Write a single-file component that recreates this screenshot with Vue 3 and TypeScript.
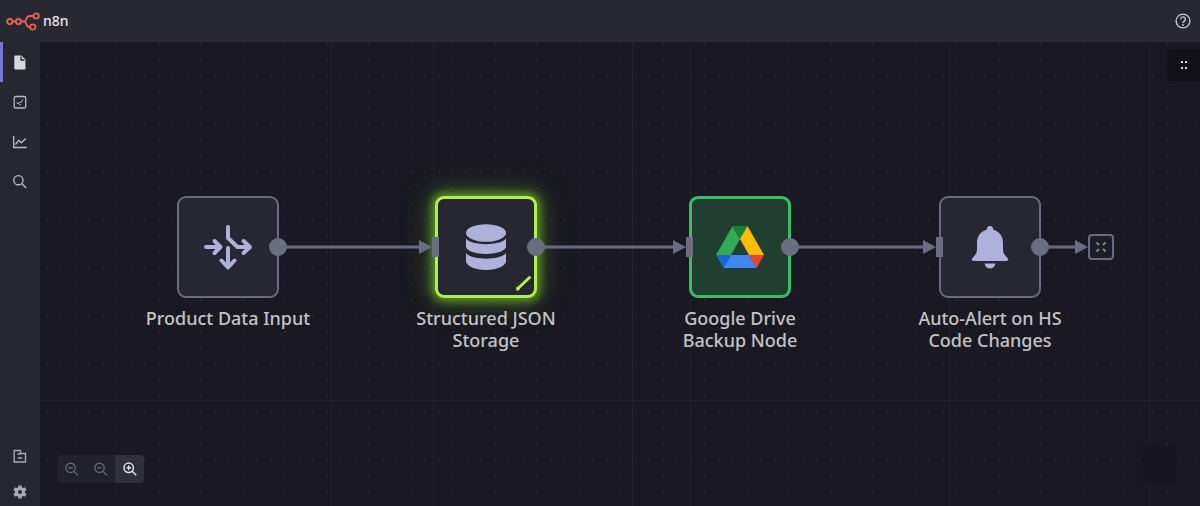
<script setup lang="ts">
import { ref } from 'vue'

type Kind = 'split' | 'database' | 'drive' | 'bell'

interface FlowNode {
  id: string
  kind: Kind
  lines: string[]
  x: number
  y: number
  hasInput: boolean
}

const nodes: FlowNode[] = [
  { id: 'input', kind: 'split', lines: ['Product Data Input'], x: 137, y: 154, hasInput: false },
  { id: 'storage', kind: 'database', lines: ['Structured JSON', 'Storage'], x: 395, y: 154, hasInput: true },
  { id: 'backup', kind: 'drive', lines: ['Google Drive', 'Backup Node'], x: 649, y: 154, hasInput: true },
  { id: 'alert', kind: 'bell', lines: ['Auto-Alert on HS', 'Code Changes'], x: 899, y: 154, hasInput: true },
]

const edges = [
  { from: 238, to: 392 },
  { from: 496, to: 646 },
  { from: 750, to: 896 },
  { from: 1000, to: 1048 },
]

const guides = [291, 393, 592, 650, 909, 1109]

const menu = [
  { id: 'workflows', label: 'Workflows' },
  { id: 'executions', label: 'Executions' },
  { id: 'insights', label: 'Insights' },
  { id: 'search', label: 'Search' },
]
const active = ref('workflows')
</script>

<template>
  <div class="app">
    <header class="topbar">
      <a class="brand" href="#">
        <svg class="logo" width="34" height="20" viewBox="0 0 34 20" fill="none" stroke="#e8604f" stroke-width="1.8" aria-hidden="true">
          <circle cx="3.800" cy="10.500" r="2.600" />
          <circle cx="12.500" cy="10.500" r="2.600" />
          <circle cx="30.200" cy="5" r="2.700" />
          <circle cx="26.800" cy="16" r="2.700" />
          <path d="M6.500 10.500h3.400M15.100 10.500h3.200c2.500 0 1.500-5.500 5.200-5.500h4M18.300 10.500c2.600 0 1.200 5.500 5 5.500h.8" />
        </svg>
        <span>n8n</span>
      </a>
      <button class="icon-button" type="button" aria-label="Help">
        <svg width="16" height="16" viewBox="0 0 16 16" fill="none" stroke="#c6c6ce" stroke-width="1.400" aria-hidden="true">
          <circle cx="8" cy="8" r="6.900" />
          <path d="M5.700 6.300a2.300 2.300 0 1 1 3.600 1.800C8.400 8.700 8 9 8 10" />
          <circle cx="8" cy="12" r=".9" fill="#c6c6ce" stroke="none" />
        </svg>
      </button>
    </header>

    <div class="body">
      <nav class="sidebar" aria-label="Main">
        <div class="menu">
          <button
            v-for="item in menu"
            :key="item.id"
            type="button"
            class="menu-item"
            :class="{ active: active === item.id }"
            :aria-label="item.label"
            @click="active = item.id"
          >
            <svg v-if="item.id === 'workflows'" width="16" height="16" viewBox="0 0 16 16" aria-hidden="true">
              <path d="M3.300 1.500h6l4.200 4v9a1 1 0 0 1-1 1H3.300a1 1 0 0 1-1-1v-12a1 1 0 0 1 1-1z" fill="#d6d6de" />
              <path d="M9 2.500v3.500h3.500" fill="none" stroke="#272732" stroke-width="1.300" />
            </svg>
            <svg v-else-if="item.id === 'executions'" width="16" height="16" viewBox="0 0 16 16" fill="none" stroke="#b9b9c2" stroke-width="1.300" aria-hidden="true">
              <rect x="2.200" y="2.500" width="11.500" height="11.500" rx="1.500" />
              <path d="M4.500 8.500l1.500 1.500 1.500-2 1 1 2.500-3.500M7 10.500h1.500" stroke-width="1" />
            </svg>
            <svg v-else-if="item.id === 'insights'" width="16" height="16" viewBox="0 0 16 16" fill="none" stroke="#b9b9c2" stroke-width="1.400" aria-hidden="true">
              <path d="M1.700 2v11.500h13M3.500 10.500l3.300-4.300 2.500 2.500 4.500-4.200" />
            </svg>
            <svg v-else width="16" height="16" viewBox="0 0 16 16" fill="none" stroke="#b9b9c2" stroke-width="1.400" aria-hidden="true">
              <circle cx="6.400" cy="6.200" r="4.600" />
              <path d="M9.700 9.500l4.500 4.500" />
            </svg>
          </button>
        </div>
        <div class="menu-bottom">
          <button type="button" class="menu-item" aria-label="Templates">
            <svg width="16" height="16" viewBox="0 0 16 16" fill="none" stroke="#a9a9b4" stroke-width="1.400" aria-hidden="true">
              <path d="M2.200 2.500h6.300v3h5v8.500H2.200zM5.500 6h3M5.800 10h4.400" />
            </svg>
          </button>
          <button type="button" class="menu-item" aria-label="Settings">
            <svg width="16" height="16" viewBox="0 0 24 24" fill="#a9a9b4" aria-hidden="true">
              <path d="M19.400 13a7.500 7.500 0 0 0 0-2l2.100-1.600a.5.5 0 0 0 .1-.6l-2-3.500a.5.5 0 0 0-.6-.2l-2.500 1a7.300 7.300 0 0 0-1.700-1l-.4-2.600a.5.5 0 0 0-.5-.4h-4a.5.5 0 0 0-.5.4L9 5.100a7.700 7.700 0 0 0-1.700 1l-2.500-1a.5.5 0 0 0-.6.2l-2 3.500a.5.5 0 0 0 .1.6L4.500 11a7.900 7.900 0 0 0 0 2l-2.100 1.600a.5.5 0 0 0-.1.600l2 3.500c.1.200.4.300.6.200l2.500-1a7.300 7.300 0 0 0 1.700 1l.4 2.600c0 .2.200.4.500.4h4c.2 0 .5-.2.500-.4l.4-2.600a7.300 7.300 0 0 0 1.700-1l2.500 1c.2.100.5 0 .6-.2l2-3.500a.5.5 0 0 0-.1-.6zM12 15a3 3 0 1 1 0-6 3 3 0 0 1 0 6z" />
            </svg>
          </button>
        </div>
      </nav>

      <main class="canvas">
        <span v-for="x in guides" :key="x" class="guide" :style="{ left: x + 'px' }"></span>
        <span class="guide-row"></span>

        <article
          v-for="node in nodes"
          :key="node.id"
          class="node"
          :class="node.kind"
          :style="{ left: node.x + 'px', top: node.y + 'px' }"
        >
          <div class="box">
            <svg v-if="node.kind === 'split'" width="50" height="50" viewBox="0 0 50 50" fill="none" stroke="#b0b1db" stroke-width="4" stroke-linecap="round" stroke-linejoin="round" aria-hidden="true">
              <path d="M3 25h14M11.500 19l6 6-6 6" />
              <path d="M25 5v11l9.500 9H47M40.500 19l6.500 6-6.500 6" />
              <path d="M25 26v19M18.500 38.500l6.500 7 6.500-7" />
            </svg>
            <svg v-else-if="node.kind === 'database'" width="50" height="50" viewBox="0 0 50 50" fill="#b0b1db" aria-hidden="true">
              <ellipse cx="25" cy="11" rx="20" ry="8.700" />
              <path d="M5 16.500c5 7.500 35 7.500 40 0v9c-4 8.500-36 8.500-40 0z" />
              <path d="M5 31c5 7.500 35 7.500 40 0v9c-4 10.500-36 10.500-40 0z" />
            </svg>
            <svg v-else-if="node.kind === 'drive'" width="50" height="50" viewBox="0 0 50 50" aria-hidden="true">
              <path d="M17.500 4L1 33h15L25 17z" fill="#34a853" />
              <path d="M17.500 4h15L25 17z" fill="#188038" />
              <path d="M32.500 4L49 33H34l-9-16z" fill="#fbbc04" />
              <path d="M1 33h15L8.500 46z" fill="#1967d2" />
              <path d="M16 33h18l7.500 13h-33z" fill="#4285f4" />
              <path d="M34 33h15l-7.500 13z" fill="#ea4335" />
            </svg>
            <svg v-else width="50" height="50" viewBox="0 0 50 50" fill="#b0b1db" aria-hidden="true">
              <path d="M25 4a3.200 3.200 0 0 0-3.200 3.700C15 9.500 12 14.500 12 21v6c0 4-1.500 6-4 8.500-2.200 2-1.200 3.500 1 3.500h32c2.200 0 3.200-1.500 1-3.500-2.500-2.500-4-4.500-4-8.500v-6c0-6.500-3-11.500-9.800-13.300A3.200 3.200 0 0 0 25 4z" />
              <path d="M19.500 41.500h11c-.5 3-2.800 5-5.500 5s-5-2-5.500-5z" />
            </svg>
          </div>
          <span v-if="node.hasInput" class="port-in"></span>
          <span class="port-out"></span>
          <svg v-if="node.kind === 'database'" class="pencil" width="18" height="18" viewBox="0 0 18 18" aria-hidden="true">
            <path d="M15.500 2.500L4.500 13" stroke="#b2f34d" stroke-width="3" stroke-linecap="round" fill="none" />
            <path d="M2.500 11.500l3.500 2.500-1.500 1.500H2z" fill="#b2f34d" />
          </svg>
          <h2 class="label">
            <span v-for="line in node.lines" :key="line">{{ line }}</span>
          </h2>
        </article>

        <svg class="edges" aria-hidden="true">
          <g v-for="edge in edges" :key="edge.from">
            <line :x1="edge.from" y1="205" :x2="edge.to - 10" y2="205" stroke="#686b7f" stroke-width="3" />
            <path :d="`M${edge.to - 13} 198l13 7-13 7z`" fill="#6a6d80" />
          </g>
        </svg>

        <button class="end" type="button" aria-label="Add node">
          <svg width="12" height="12" viewBox="0 0 12 12" fill="none" stroke="#85889a" stroke-width="1.800" aria-hidden="true">
            <path d="M1.500 1.500l2.500 2.500M10.500 1.500L8 4M1.500 10.500L4 8M10.500 10.500L8 8" />
          </svg>
        </button>

        <button class="panel-toggle" type="button" aria-label="Open node panel">
          <svg width="8" height="8" viewBox="0 0 8 8" fill="#d6d6de" aria-hidden="true">
            <path d="M1 0h2v2H1zM5 0h2v2H5zM1 6h2v2H1zM5 6h2v2H5z" />
          </svg>
        </button>

        <div class="minimap"></div>

        <div class="zoom" role="group" aria-label="Zoom">
          <button type="button" aria-label="Zoom to fit">
            <svg width="14" height="14" viewBox="0 0 14 14" fill="none" stroke="#6c6c78" stroke-width="1.200" aria-hidden="true">
              <circle cx="5.500" cy="5.800" r="4.700" /><path d="M9 9.300l4 4M3.300 5.800h4.400" />
            </svg>
          </button>
          <button type="button" aria-label="Zoom out">
            <svg width="14" height="14" viewBox="0 0 14 14" fill="none" stroke="#6c6c78" stroke-width="1.200" aria-hidden="true">
              <circle cx="5.500" cy="5.800" r="4.700" /><path d="M9 9.300l4 4M3.300 5.800h4.400" />
            </svg>
          </button>
          <button type="button" class="on" aria-label="Zoom in">
            <svg width="14" height="14" viewBox="0 0 14 14" fill="none" stroke="#e2e2e8" stroke-width="1.500" aria-hidden="true">
              <circle cx="5.700" cy="5.800" r="4.700" /><path d="M9.200 9.300l4 4M3.400 5.800H8M5.700 3.500v4.600" />
            </svg>
          </button>
        </div>
      </main>
    </div>
  </div>
</template>

<style>
body {
  margin: 0;
  background: #1a1923;
}
</style>

<style scoped>
.app {
  display: flex;
  flex-direction: column;
  min-height: 100vh;
  font-family: "Noto Sans", "Open Sans", sans-serif;
  color: #c3c3c4;
}

button {
  display: flex;
  align-items: center;
  justify-content: center;
  margin: 0;
  padding: 0;
  border: 0;
  background: none;
  cursor: pointer;
}

.topbar {
  display: flex;
  align-items: center;
  justify-content: space-between;
  height: 42px;
  padding: 0 9px 0 6px;
  background: #282833;
}

.brand {
  display: flex;
  align-items: center;
  gap: 3px;
  color: #e6e6ea;
  font-size: 14px;
  font-weight: 500;
  line-height: 20px;
  text-decoration: none;
}

.body {
  display: flex;
  flex: 1;
}

.sidebar {
  display: flex;
  flex-direction: column;
  justify-content: space-between;
  width: 40px;
  background: #272732;
}

.menu-item {
  box-sizing: border-box;
  width: 40px;
  height: 40px;
  border-left: 3px solid transparent;
  padding-right: 3px;
}

.menu-item.active {
  border-left-color: #7675cf;
}

.menu-bottom .menu-item {
  height: 36px;
}

.menu-bottom {
  margin-bottom: -4px;
}

.canvas {
  position: relative;
  flex: 1;
  overflow: hidden;
  background-color: #1a1923;
  background-image:
    radial-gradient(circle, #262630 1px, transparent 1px),
    radial-gradient(circle, #262630 1px, transparent 1px);
  background-size: 14px 48px, 42px 16px;
  background-position: 0 10px, 14px 10px;
}

.guide {
  position: absolute;
  top: 0;
  bottom: 0;
  width: 1px;
  background: #23232d;
}

.guide-row {
  position: absolute;
  top: 358px;
  left: 0;
  right: 0;
  height: 1px;
  background: #23232d;
}

.edges {
  position: absolute;
  inset: 0;
  width: 100%;
  height: 100%;
  pointer-events: none;
}

.node {
  position: absolute;
  display: flex;
  flex-direction: column;
  align-items: center;
  gap: 9px;
  width: 102px;
}

.box {
  box-sizing: border-box;
  display: flex;
  align-items: center;
  justify-content: center;
  width: 102px;
  height: 102px;
  border: 2px solid #696c80;
  border-radius: 9px;
  background: #272733;
}

.database .box {
  border: 3px solid #b0ef50;
  box-shadow: 0 0 8px 3px #5f9628, 0 0 24px 4px #3b5a20;
}

.drive .box {
  border: 3px solid #38bf63;
  background: #213f30;
}

.port-in {
  position: absolute;
  top: 41px;
  left: -3px;
  width: 7px;
  height: 20px;
  background: #6b6e81;
}

.port-out {
  position: absolute;
  top: 42px;
  right: -8px;
  width: 18px;
  height: 18px;
  border-radius: 50%;
  background: #6b6e81;
}

.pencil {
  position: absolute;
  top: 79px;
  right: 5px;
}

.label {
  display: flex;
  flex-direction: column;
  align-items: center;
  margin: 0;
  font-size: 18px;
  font-weight: 500;
  line-height: 22px;
  white-space: nowrap;
}

.end {
  position: absolute;
  top: 192px;
  left: 1048px;
  width: 26px;
  height: 26px;
  border: 2px solid #696c80;
  border-radius: 4px;
  background: #1d1c27;
}

.panel-toggle {
  position: absolute;
  top: 7px;
  right: 0;
  width: 33px;
  height: 32px;
  border-radius: 4px 0 0 4px;
  background: #12111a;
}

.minimap {
  position: absolute;
  right: 24px;
  bottom: 24px;
  width: 36px;
  height: 36px;
  background: #181721;
}

.zoom {
  position: absolute;
  left: 17px;
  bottom: 23px;
  display: flex;
  border-radius: 4px;
  overflow: hidden;
  background: #22222d;
}

.zoom button {
  width: 29px;
  height: 28px;
}

.zoom .on {
  background: #30303d;
}
</style>
